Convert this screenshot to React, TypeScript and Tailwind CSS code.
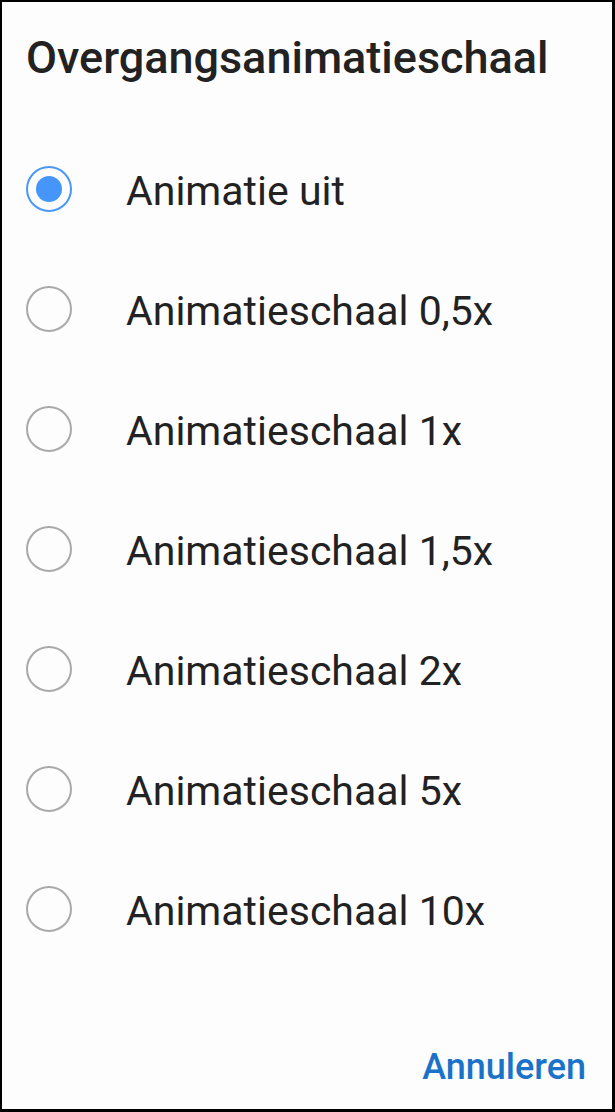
import React, { useState } from "react";

const options = [
  "Animatie uit",
  "Animatieschaal 0,5x",
  "Animatieschaal 1x",
  "Animatieschaal 1,5x",
  "Animatieschaal 2x",
  "Animatieschaal 5x",
  "Animatieschaal 10x",
];

const Radio = ({ checked }: { checked: boolean }) => (
  <div
    className={`w-[46px] h-[46px] rounded-full border-2 flex items-center justify-center shrink-0 ${
      checked ? "border-[#4a97f5]" : "border-[#a9a9a9]"
    }`}
  >
    {checked && <div className="w-[26px] h-[26px] rounded-full bg-[#4596f8]" />}
  </div>
);

export default function App() {
  const [selected, setSelected] = useState(0);

  return (
    <div
      className="w-[615px] h-[1112px] bg-[#fdfdfd] border-black border-l-2 border-t-2 border-r-[3px] border-b-[3px] flex flex-col text-[#222222]"
      style={{ fontFamily: "Roboto, 'Noto Sans', sans-serif" }}
    >
      <h1 className="pl-[24px] pt-[29px] text-[45px] leading-[54px] font-medium">
        Overgangsanimatieschaal
      </h1>

      {/* options */}
      <div className="mt-[46px] flex flex-col">
        {options.map((label, i) => (
          <div
            key={label}
            onClick={() => setSelected(i)}
            className="h-[120px] flex items-center pl-[24px] cursor-pointer"
          >
            <div className="-mt-[4px]">
              <Radio checked={selected === i} />
            </div>
            <span className="ml-[54px] text-[41px] leading-[120px]">{label}</span>
          </div>
        ))}
      </div>

      <div className="mt-auto flex justify-end pr-[26px] pb-[22px]">
        <button className="text-[36px] leading-[40px] font-medium text-[#1a73c8]">
          Annuleren
        </button>
      </div>
    </div>
  );
}
